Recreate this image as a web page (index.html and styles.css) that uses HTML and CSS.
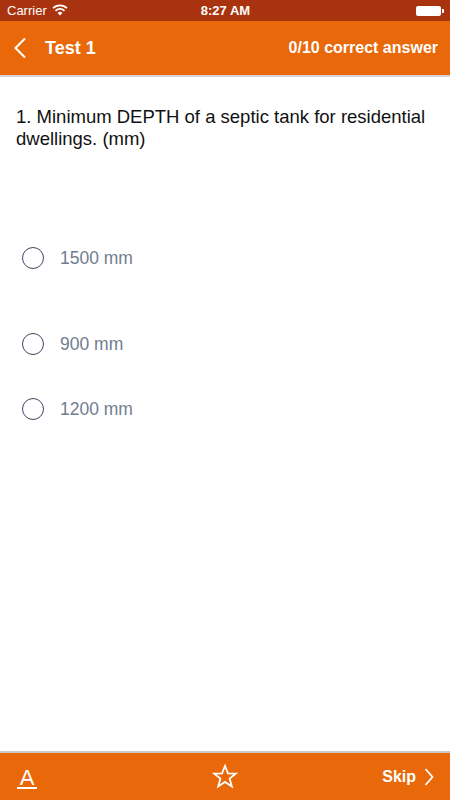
FILE: index.html
```html
<!DOCTYPE html>
<html>
<head>
<meta charset="utf-8">
<link rel="stylesheet" href="styles.css">
</head>
<body>
<div class="app">
  <div class="status">
    <div class="st-left">
      <span class="carrier">Carrier</span>
      <svg class="wifi" width="16" height="12" viewBox="0 0 16 12">
        <path d="M1 4.2 A10 10 0 0 1 15 4.2" fill="none" stroke="#fff" stroke-width="1.8"/>
        <path d="M3.5 6.8 A6.3 6.3 0 0 1 12.5 6.8" fill="none" stroke="#fff" stroke-width="1.8"/>
        <path d="M8 11.5 L5.6 9 A3.4 3.4 0 0 1 10.4 9 Z" fill="#fff"/>
      </svg>
    </div>
    <div class="time">8:27 AM</div>
    <div class="st-right">
      <div class="battery"><div class="bat-body"></div><div class="bat-tip"></div></div>
    </div>
  </div>
  <div class="nav">
    <div class="nav-left">
      <svg class="back" width="14" height="22" viewBox="0 0 14 22">
        <path d="M12 1.5 L2.5 11 L12 20.5" fill="none" stroke="#fff" stroke-width="2"/>
      </svg>
      <span class="title">Test 1</span>
    </div>
    <span class="score">0/10 correct answer</span>
  </div>
  <div class="content">
    <p class="question">1. Minimum DEPTH of a septic tank for residential dwellings. (mm)</p>
    <div class="options">
      <div class="option first"><span class="radio"></span><span class="opt-text">1500 mm</span></div>
      <div class="option second"><span class="radio"></span><span class="opt-text">900 mm</span></div>
      <div class="option third"><span class="radio"></span><span class="opt-text">1200 mm</span></div>
    </div>
  </div>
  <div class="toolbar">
    <span class="font-btn">A</span>
    <svg class="star" width="26" height="25" viewBox="0 0 26 25">
      <path d="M13 1.8 L15.9 9.3 L23.9 9.6 L17.6 14.6 L19.8 22.4 L13 17.9 L6.2 22.4 L8.4 14.6 L2.1 9.6 L10.1 9.3 Z" fill="none" stroke="#fff" stroke-width="1.8" stroke-linejoin="miter"/>
    </svg>
    <div class="skip">
      <span>Skip</span>
      <svg width="10" height="18" viewBox="0 0 10 18">
        <path d="M1.5 1 L8.5 9 L1.5 17" fill="none" stroke="#fff" stroke-width="1.8"/>
      </svg>
    </div>
  </div>
</div>
</body>
</html>
```
FILE: styles.css
```css
* { box-sizing: border-box; }
html, body { margin: 0; padding: 0; }
body { font-family: "Liberation Sans", Arial, sans-serif; background: #fff; }
.app { width: 450px; height: 800px; display: flex; flex-direction: column; }
.status {
  height: 21px; background: #a9330e; color: #fff;
  display: flex; align-items: center; justify-content: space-between;
  padding: 0 6px 0 7px; position: relative;
}
.st-left { display: flex; align-items: center; gap: 5px; width: 120px; }
.carrier { font-size: 13px; }
.wifi { margin-top: -1px; }
.time { font-size: 13px; font-weight: bold; }
.st-right { width: 120px; display: flex; justify-content: flex-end; }
.battery { display: flex; align-items: center; }
.bat-body { width: 25px; height: 10px; background: #fff; border-radius: 2px; }
.bat-tip { width: 2px; height: 4px; background: #fff; margin-left: 1px; border-radius: 0 1px 1px 0; }
.nav {
  height: 56px; background: #e9680a; color: #fff;
  display: flex; align-items: center; justify-content: space-between;
  padding: 0 12px 0 13px; border-bottom: 2px solid #d6d6d6;
}
.nav-left { display: flex; align-items: center; gap: 18px; }
.back { display: block; }
.title { font-size: 18px; font-weight: bold; }
.score { font-size: 16px; font-weight: bold; }
.content { flex: 1; padding: 0 16px; }
.question { margin: 29px 0 0; font-size: 18.5px; line-height: 22px; color: #111; }
.options { margin-top: 0; }
.option { display: flex; align-items: center; gap: 16px; padding-left: 6px; }
.option.first { margin-top: 97px; }
.option.second { margin-top: 64px; }
.option.third { margin-top: 43px; }
.radio { width: 22px; height: 22px; border: 1.3px solid #3b4a60; border-radius: 50%; flex: none; }
.opt-text { font-size: 17.5px; color: #717d8e; line-height: 22px; }
.toolbar {
  height: 49px; background: #e9680a; border-top: 2px solid #c9c9c9;
  display: flex; align-items: center; justify-content: space-between;
  padding: 0 16px 0 17px; position: relative;
}
.font-btn {
  color: #fff; font-size: 22px; border-bottom: 2.5px solid #fff;
  line-height: 17px; width: 20px; text-align: center; margin-top: 4px; padding-bottom: 1px;
}
.star { position: absolute; left: 212px; top: 11px; }
.skip { display: flex; align-items: center; gap: 8px; color: #fff; font-weight: bold; font-size: 16px; }
.skip svg { display: block; }
```
